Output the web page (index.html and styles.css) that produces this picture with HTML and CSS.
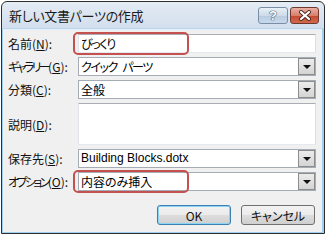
FILE: index.html
```html
<!DOCTYPE html>
<html lang="ja">
<head>
  <meta charset="UTF-8" />
  <title>新しい文書パーツの作成</title>
  <link rel="stylesheet" href="styles.css">
</head>
<body>

  <div class="window">
    <div class="titlebar">
      <span class="title">新しい文書パーツの作成</span>
      <div class="caption-btns">
        <span class="cap-btn help">?</span>
        <span class="cap-btn close">
          <svg width="14" height="11" viewBox="0 0 14 11">
            <path d="M3 2 L11 9 M11 2 L3 9" stroke="#4a2a24" stroke-width="4" stroke-linecap="round"/>
            <path d="M3 2 L11 9 M11 2 L3 9" stroke="#fff" stroke-width="2.2" stroke-linecap="round"/>
          </svg>
        </span>
      </div>
    </div>

    <div class="client">
      <div class="form">
        <label>名前(<u>N</u>):</label>
        <div class="field">
          <div class="box"><span class="tight">びっくり</span></div>
          <span class="mark"></span>
        </div>

        <label><span class="kana">ギャラリー</span>(<u>G</u>):</label>
        <div class="field">
          <div class="box combo"><span class="val tight">クイック パーツ</span><span class="drop"></span></div>
        </div>

        <label>分類(<u>C</u>):</label>
        <div class="field">
          <div class="box combo"><span class="val">全般</span><span class="drop"></span></div>
        </div>

        <label>説明(<u>D</u>):</label>
        <div class="field">
          <div class="box memo"></div>
        </div>

        <label>保存先(<u>S</u>):</label>
        <div class="field">
          <div class="box combo"><span class="val latin">Building Blocks.dotx</span><span class="drop"></span></div>
        </div>

        <label><span class="kana">オプション</span>(<u>O</u>):</label>
        <div class="field">
          <div class="box combo"><span class="val">内容のみ挿入</span><span class="drop"></span></div>
          <span class="mark"></span>
        </div>
      </div>

      <div class="buttons">
        <button class="btn default">OK</button>
        <button class="btn">キャンセル</button>
      </div>
    </div>
  </div>

</body>
</html>
```

FILE: styles.css
```css
* { margin: 0; padding: 0; box-sizing: border-box; }
body {
  background: #fff;
  font-family: "Noto Sans CJK JP", "Noto Sans", sans-serif;
  font-size: 12px;
  font-feature-settings: "palt";
  color: #000;
}
.window {
  margin: 1px 0 0 1px;
  width: 324px;
  height: 233px;
  border: 1px solid #2e2e2e;
  border-radius: 6px 6px 0 0;
  background: linear-gradient(#e4ecf5, #d2dfec 26px, #9fd0ee 27px);
  padding: 0 2px 1px 1px;
  display: flex;
  flex-direction: column;
}
.titlebar {
  height: 27px;
  display: flex;
  align-items: center;
  justify-content: space-between;
  padding: 0 3px 0 6px;
}
.title { font-size: 13px; color: #1b1b1b; letter-spacing: -0.3px; }
.caption-btns { display: flex; gap: 2px; margin-top: -1px; }
.cap-btn {
  width: 30px;
  height: 17px;
  border-radius: 3px;
  display: flex;
  align-items: center;
  justify-content: center;
}
.help {
  background: linear-gradient(#e9f0f7, #cddbea 50%, #b7cbe0 51%, #c8d9eb);
  border: 1px solid #7a8ea6;
  color: #fff;
  font-family: "Liberation Sans", sans-serif;
  font-weight: bold;
  font-size: 13px;
  text-shadow: 0 0 1px #3c4a5c, 0 0 1px #3c4a5c, 0 0 1px #3c4a5c;
}
.close {
  width: 29px;
  background: linear-gradient(#eab0a4, #d9806d 50%, #c5472f 51%, #d36a4c);
  border: 1px solid #6e3a30;
}
.client {
  flex: 1;
  background: #f0f0f0;
  border-top: 1px solid #e6edf4;
  padding: 4px 6px 0 5px;
}
.form {
  display: grid;
  grid-template-columns: 70px 1fr;
  grid-template-rows: 19px 19px 19px 42px 19px 19px;
  row-gap: 4px;
  align-items: center;
}
label { white-space: nowrap; color: #111; }
.kana { letter-spacing: -2.6px; }
.tight { letter-spacing: -1.4px; word-spacing: 4px; }
.field { position: relative; height: 100%; }
.box {
  height: 100%;
  background: #fff;
  border: 1px solid #abadb3;
  border-color: #abadb3 #dbdfe6 #e3e9ef #e2e3ea;
  padding-left: 2px;
  line-height: 17px;
  white-space: nowrap;
}
.combo {
  display: flex;
  border: 1px solid #a5acb5;
}
.combo .val { flex: 1; }
.latin { font-family: "Liberation Sans", sans-serif; }
.drop {
  width: 17px;
  margin: 0 0 0 auto;
  background: linear-gradient(#ececec, #d4d4d4);
  border: 1px solid #8c8c8c;
  position: relative;
}
.drop::after {
  content: "";
  position: absolute;
  left: 4px;
  top: 6px;
  border-left: 4px solid transparent;
  border-right: 4px solid transparent;
  border-top: 4px solid #111;
}
.memo { border-color: #abadb3 #dbdfe6 #e3e9ef #e2e3ea; }
.mark {
  position: absolute;
  left: -5px;
  top: -2px;
  width: 116px;
  height: 23px;
  border: 2px solid #c4504f;
  border-radius: 5px;
}
.buttons {
  display: flex;
  justify-content: flex-end;
  gap: 10px;
  margin: 14px 1px 0 0;
}
.btn {
  width: 74px;
  height: 20px;
  font-family: inherit;
  font-size: 12px;
  font-feature-settings: "palt";
  color: #111;
  border: 1px solid #707070;
  border-radius: 3px;
  background: linear-gradient(#f2f2f2, #ebebeb 50%, #dddddd 51%, #cfcfcf);
}
.default {
  border-color: #3c7fb1;
  box-shadow: inset 0 0 0 1px #8fd3f3;
}
```
